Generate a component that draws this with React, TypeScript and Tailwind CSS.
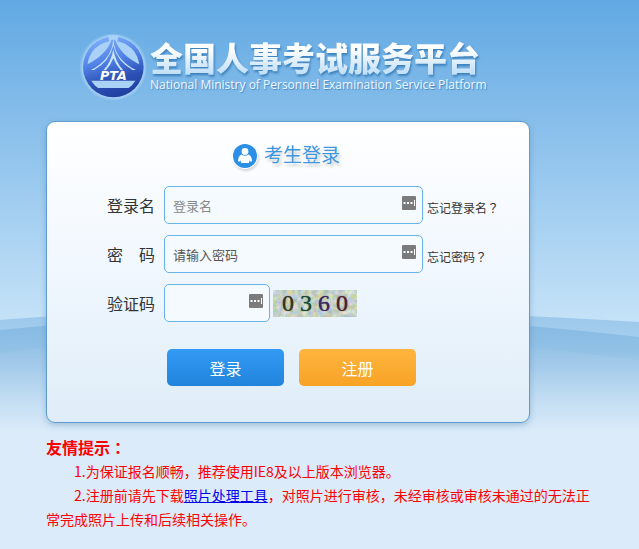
import type { ReactNode } from 'react';

function Logo() {
  return (
    <svg viewBox="28 25 204 204" className="h-[68px] w-[68px] shrink-0" aria-label="PTA">
      <defs>
        <linearGradient id="logoBlue" gradientUnits="userSpaceOnUse" x1="100" y1="36" x2="150" y2="218">
          <stop offset="0" stopColor="#7eaefc" />
          <stop offset="0.4" stopColor="#4f80e4" />
          <stop offset="0.7" stopColor="#2c50b4" />
          <stop offset="1" stopColor="#1f3f9f" />
        </linearGradient>
        <radialGradient id="logoGlow">
          <stop offset="0.86" stopColor="#b5d9f8" />
          <stop offset="1" stopColor="#b5d9f8" stopOpacity="0" />
        </radialGradient>
        <clipPath id="logoClip">
          <circle cx="128" cy="127" r="82" />
        </clipPath>
      </defs>
      <circle cx="128" cy="127" r="102" fill="url(#logoGlow)" />
      <circle cx="128" cy="127" r="91" fill="url(#logoBlue)" />
      <circle cx="128" cy="127" r="78" fill="#a9d2f6" />
      <path d="M112 32 H144 L138 60 H118Z" fill="#a9d2f6" />
      <g clipPath="url(#logoClip)">
        <path d="M124 40 Q110 92 40 124 V168 H216 V124 Q146 92 132 40Z" fill="url(#logoBlue)" />
        <path d="M40 190 H216 V220 H40Z" fill="url(#logoBlue)" />
        <path d="M126 60 Q114 110 60 136 L70 136 Q116 112 128 62 Q140 112 186 136 L196 136 Q142 110 130 60 L128 40Z" fill="#c9e4fb" />
        <path d="M128 74 Q122 112 98 137 L106 137 Q121 120 128 100 Q135 120 150 137 L158 137 Q134 112 128 74Z" fill="#c9e4fb" />
      </g>
      <text
        x="128"
        y="167"
        textAnchor="middle"
        fill="#fff"
        className="font-['DejaVu_Sans',sans-serif] text-[38px] font-bold italic"
      >
        PTA
      </text>
    </svg>
  );
}

function Waves() {
  return (
    <svg
      viewBox="0 0 639 120"
      preserveAspectRatio="none"
      className="absolute inset-x-0 top-[315px] -z-10 h-[120px] w-full"
      aria-hidden="true"
    >
      <defs>
        <linearGradient id="waveBack" x1="0" y1="0" x2="0" y2="1">
          <stop offset="0" stopColor="#9bc7ea" />
          <stop offset="0.2" stopColor="#a3cdee" />
          <stop offset="1" stopColor="#dbebfa" />
        </linearGradient>
        <linearGradient id="waveFront" x1="0" y1="0" x2="0" y2="1">
          <stop offset="0" stopColor="#83b8e2" />
          <stop offset="0.3" stopColor="#92c1e6" />
          <stop offset="0.75" stopColor="#c4dff4" />
          <stop offset="1" stopColor="#dbebfa" />
        </linearGradient>
      </defs>
      <path d="M0 5 Q160 -8 400 -4 Q540 1 639 7 V120 H0Z" fill="url(#waveBack)" />
      <path d="M0 15 Q200 -6 400 2 Q530 9 639 22 V120 H0Z" fill="url(#waveFront)" />
      <path d="M0 38 Q200 10 400 22 Q530 31 639 45 V120 H0Z" fill="#ffffff" opacity="0.05" />
    </svg>
  );
}

function UserBadge() {
  return (
    <svg viewBox="0 0 26 26" className="h-[26px] w-[26px] drop-shadow-[1px_2px_1px_#00000026]" aria-hidden="true">
      <circle cx="13" cy="13" r="13" fill="#fff" />
      <circle cx="13" cy="13" r="12" fill="#2b8fe6" />
      <circle cx="13" cy="8.5" r="3.400" fill="#fff" />
      <path
        d="M9.500 11.500 Q13 14 16.500 11.500 Q20 13 20 18.500 H17.500 L17 16.500 V20 H9 V16.500 L8.500 18.500 H6 Q6 13 9.500 11.500Z"
        fill="#fff"
      />
    </svg>
  );
}

// key marker shown at the right end of each text box
function KeyMark() {
  return (
    <svg viewBox="0 0 14 14" className="h-3.5 w-3.5" aria-hidden="true">
      <rect width="14" height="14" rx="1" fill="#7b7b7b" />
      <path d="M1.500 6h2v2h-2zM5 6h2v2H5zM8.500 6h2v2h-2zM12 4h1v6h-1z" fill="#fff" />
    </svg>
  );
}

// punctuation centred in its full-width cell
function Mark({ children }: { children: ReactNode }) {
  return (
    <span lang="zh-TW" className="font-['Noto_Sans_CJK_TC',sans-serif]">
      {children}
    </span>
  );
}

type FieldProps = {
  id: string;
  label: ReactNode;
  type?: string;
  placeholder?: string;
  placeholderClass?: string;
  widthClass: string;
  children?: ReactNode;
};

function Field({ id, label, type = 'text', placeholder, placeholderClass = '', widthClass, children }: FieldProps) {
  return (
    <div className="flex items-center">
      <label htmlFor={id} className="mr-[9px] flex w-12 shrink-0 justify-between text-base text-[#333]">
        {label}
      </label>
      <div className={`relative ${widthClass}`}>
        <input
          id={id}
          type={type}
          placeholder={placeholder}
          className={`block h-[38px] w-full rounded-[5px] border border-[#68b4ea] bg-[#f5fafe] pr-7 pl-2 text-[13px] outline-none ${placeholderClass}`}
        />
        <span className="absolute top-2.5 right-[7px]">
          <KeyMark />
        </span>
      </div>
      {children}
    </div>
  );
}

function Captcha() {
  return (
    <div className="relative ml-[3px] flex h-[27px] w-[84px] items-center justify-center gap-1.5 overflow-hidden bg-[#c9ccc8] font-['Liberation_Serif',serif] text-2xl leading-none">
      <svg className="absolute inset-0 h-full w-full" aria-hidden="true">
        <filter id="captchaNoise" x="0" y="0" width="1" height="1" colorInterpolationFilters="sRGB">
          <feTurbulence type="fractalNoise" baseFrequency="0.2" numOctaves="3" seed="4" />
          <feColorMatrix values="0.4 0 0 0 0.58  0.2 0.2 0 0 0.62  0 0 0.6 0 0.47  0 0 0 0 1" />
        </filter>
        <rect width="100%" height="100%" filter="url(#captchaNoise)" />
      </svg>
      <span className="relative text-[#39351c] [text-shadow:0_0_1px_#39351c]">0</span>
      <span className="relative text-[#1c4a35] [text-shadow:0_0_1px_#1c4a35]">3</span>
      <span className="relative text-[#40265e] [text-shadow:0_0_1px_#40265e]">6</span>
      <span className="relative text-[#541f2c] [text-shadow:0_0_1px_#541f2c]">0</span>
    </div>
  );
}

export default function App() {
  return (
    <div className="relative isolate min-h-screen bg-[#dbebfa] bg-[linear-gradient(to_bottom,#61a9e3_0px,#85bdea_115px,#a9d2f2_230px,#c4e2f7_320px,#dbebfa_435px)] px-[46px] pt-[33px] font-['Noto_Sans_CJK_SC','Noto_Sans_CJK_TC',sans-serif]">
      <Waves />

      <header className="flex h-[88px] items-start pl-[34px]">
        <Logo />
        <div className="ml-0.5 pt-1 whitespace-nowrap">
          <h1 className="bg-gradient-to-b from-white from-30% to-[#c3e0f8] to-90% bg-clip-text text-[33px] leading-10 font-black text-transparent drop-shadow-[1px_2px_1px_#3b7fbb]">
            全国人事考试服务平台
          </h1>
          <p className="font-['Open_Sans',sans-serif] text-xs leading-4 text-[#f0f8ff] [text-shadow:1px_1px_1px_#4488c4]">
            National Ministry of Personnel Examination Service Platform
          </p>
        </div>
      </header>

      <main className="w-full max-w-[484px] rounded-[9px] border border-[#5d9bd0] bg-gradient-to-b from-white via-[#f0f7fe] to-[#dfedf8] pt-5 pb-9 shadow-[0_2px_6px_#5080a866]">
        <h2 className="flex h-7 items-center justify-center gap-1.5 pr-5 pl-4 text-[19px] text-[#3d97dd]">
          <UserBadge />
          <span className="pb-1 [text-shadow:0_0_2px_#fff,2px_3px_3px_#00000033]">考生登录</span>
        </h2>

        <form className="mt-4 flex flex-col gap-[11px] pl-[60px]" onSubmit={(e) => e.preventDefault()}>
          <Field id="username" label="登录名" placeholder="登录名" placeholderClass="placeholder:text-[#888]" widthClass="w-[259px]">
            <a href="#" className="ml-1 pt-1.5 text-xs text-[#333]">
              忘记登录名<Mark>？</Mark>
            </a>
          </Field>
          <Field
            id="password"
            type="password"
            label={
              <>
                <span>密</span>
                <span>码</span>
              </>
            }
            placeholder="请输入密码"
            placeholderClass="placeholder:text-[#555]"
            widthClass="w-[259px]"
          >
            <a href="#" className="ml-1 pt-1.5 text-xs text-[#333]">
              忘记密码<Mark>？</Mark>
            </a>
          </Field>
          <Field id="captcha" label="验证码" widthClass="w-[106px]">
            <Captcha />
          </Field>

          <div className="mt-4 ml-[60px] flex gap-[15px] text-base text-white">
            <button
              type="submit"
              className="h-[37px] w-[117px] rounded-[5px] bg-gradient-to-b from-[#339af5] to-[#2184db]"
            >
              登录
            </button>
            <button
              type="button"
              className="h-[37px] w-[117px] rounded-[5px] bg-gradient-to-b from-[#ffb53d] to-[#f7a325]"
            >
              注册
            </button>
          </div>
        </form>
      </main>

      <section className="mt-3 text-sm leading-6 text-[#f00]">
        <h3 className="text-base leading-6 font-bold">
          友情提示<Mark>：</Mark>
        </h3>
        <p className="indent-7">1.为保证报名顺畅，推荐使用IE8及以上版本浏览器。</p>
        <p className="indent-7">
          2.注册前请先下载
          <a href="#" className="text-[#00e] underline">
            照片处理工具
          </a>
          ，对照片进行审核，未经审核或审核未通过的无法正常完成照片上传和后续相关操作。
        </p>
      </section>
    </div>
  );
}
